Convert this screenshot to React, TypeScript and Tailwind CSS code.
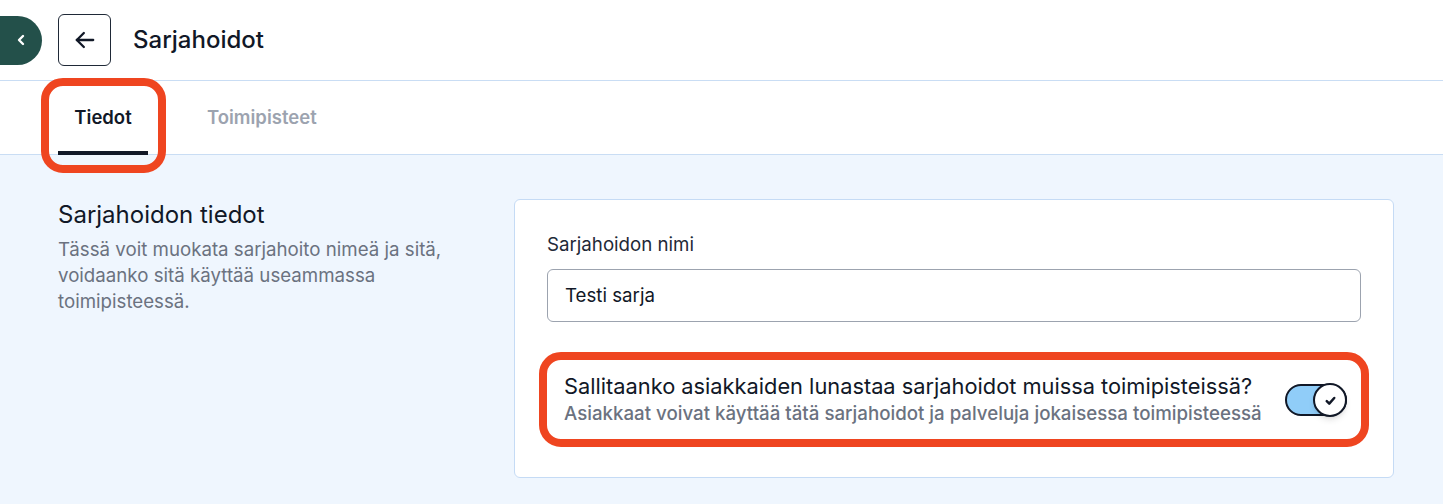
import React, { useState } from 'react';

const App = () => {
  const [allowOther, setAllowOther] = useState(true);
  const [name, setName] = useState('Testi sarja');
  const [tab, setTab] = useState('tiedot');

  return (
    <div className="min-h-[504px] w-full bg-[#eff6fe] font-['Inter',sans-serif] text-[#111827]">
      <header className="flex h-[81px] items-center border-b border-[#c9ddf4] bg-white">
        <button className="flex h-[49px] w-[42px] items-center justify-center rounded-r-full bg-[#23504a] text-white" aria-label="Collapse">
          <svg width="16" height="16" viewBox="0 0 24 24" fill="none" stroke="currentColor" strokeWidth="3.6" strokeLinecap="round" strokeLinejoin="round">
            <path d="M15 18l-6-6 6-6" />
          </svg>
        </button>
        <button className="ml-4 flex h-[52px] w-[53px] items-center justify-center rounded-md border border-[#1f2937]" aria-label="Back">
          <svg width="28" height="28" viewBox="0 0 24 24" fill="none" stroke="#111827" strokeWidth="2" strokeLinecap="round" strokeLinejoin="round">
            <path d="M19 12H5" />
            <path d="M11 6l-6 6 6 6" />
          </svg>
        </button>
        <h1 className="ml-[22px] text-[24px] font-medium">Sarjahoidot</h1>
      </header>

      <nav className="flex h-[74px] border-b border-[#c9ddf4] bg-white px-[58px]">
        <button
          onClick={() => setTab('tiedot')}
          className={`relative w-[90px] text-[18.5px] font-semibold ${tab === 'tiedot' ? 'text-[#111827]' : 'text-[#9ca3af]'}`}
        >
          Tiedot
          {tab === 'tiedot' && <span className="absolute bottom-[-1px] left-0 h-[4px] w-full bg-[#111827]" />}
          <span className="pointer-events-none absolute -left-[17px] -right-[18px] -top-[3px] -bottom-[19px] rounded-[22px] border-[8px] border-[#ef4520]" />
        </button>
        <button
          onClick={() => setTab('toimipisteet')}
          className={`relative ml-[42px] px-[17px] text-[18.5px] font-semibold ${tab === 'toimipisteet' ? 'text-[#111827]' : 'text-[#9ca3af]'}`}
        >
          Toimipisteet
        </button>
      </nav>

      <main className="flex pl-[58px] pr-[49px] pt-[44px] pb-[27px]">
        <section className="w-[456px] shrink-0">
          <h2 className="text-[24px] font-normal leading-[32px]">Sarjahoidon tiedot</h2>
          <p className="mt-[6px] w-[410px] text-[18.7px] leading-[26px] text-[#6b7280]">
            Tässä voit muokata sarjahoito nimeä ja sitä, voidaanko sitä käyttää useammassa toimipisteessä.
          </p>
        </section>

        <div className="flex-1 rounded-md border border-[#c5dbf5] bg-white px-8 pt-[33px] pb-[38px]">
          <label className="block text-[18.7px] leading-[24px] text-[#1f2937]">Sarjahoidon nimi</label>
          <input
            value={name}
            onChange={(e) => setName(e.target.value)}
            className="mt-3 h-[53px] w-full rounded-md border border-[#9ca3af] px-[17px] text-[18.7px] text-[#111827] outline-none"
          />

          <div className="relative mt-[38px] flex items-center justify-between pl-[17px] pr-[14px] pt-[13px] pb-[12px]">
            <div className="leading-[27px]">
              <div className="text-[21.8px] text-[#111827]">Sallitaanko asiakkaiden lunastaa sarjahoidot muissa toimipisteissä?</div>
              <div className="text-[18.7px] font-medium text-[#6b7280]">Asiakkaat voivat käyttää tätä sarjahoidot ja palveluja jokaisessa toimipisteessä</div>
            </div>
            <button
              onClick={() => setAllowOther((v) => !v)}
              className={`relative flex h-[32px] w-[62px] shrink-0 items-center rounded-full border-2 border-[#111827] ${allowOther ? 'bg-[#90cdf8]' : 'bg-gray-200'}`}
              aria-label="Toggle"
            >
              <span
                className={`absolute top-[-3px] flex h-[34px] w-[34px] items-center justify-center rounded-full border-2 border-[#111827] bg-white shadow-md ${allowOther ? 'right-[-2px]' : 'left-[-2px]'}`}
              >
                {allowOther && (
                  <svg width="15" height="15" viewBox="0 0 24 24" fill="none" stroke="#111827" strokeWidth="4" strokeLinecap="round" strokeLinejoin="round">
                    <path d="M6 13l4 4 8-9" />
                  </svg>
                )}
              </span>
            </button>
            <span className="pointer-events-none absolute -inset-[8px] rounded-[22px] border-[8px] border-[#ef4520]" />
          </div>
        </div>
      </main>
    </div>
  );
};

export default App;
